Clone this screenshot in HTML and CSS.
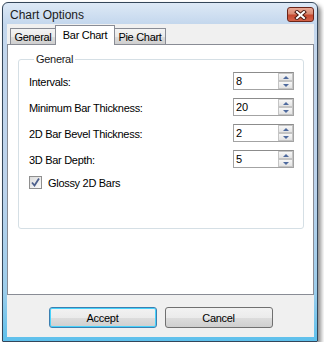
FILE: index.html
```html
<!DOCTYPE html>
<html>
<head>
  <meta charset="UTF-8">
  <title>Chart Options</title>
  <link rel="stylesheet" href="styles.css">
</head>
<body>
  <div class="window">
    <div class="titlebar">
      <span class="title">Chart Options</span>
      <span class="close-btn">
        <svg width="13" height="10" viewBox="0 0 13 10">
          <path d="M3 2 L10 8 M10 2 L3 8" stroke="#4a1a12" stroke-width="4" stroke-linecap="square"/>
          <path d="M3 2 L10 8 M10 2 L3 8" stroke="#ffffff" stroke-width="2" stroke-linecap="square"/>
        </svg>
      </span>
    </div>

    <div class="client">
      <div class="tab-strip">
        <span class="tab tab-general">General</span>
        <span class="tab tab-bar active">Bar Chart</span>
        <span class="tab tab-pie">Pie Chart</span>
      </div>

      <div class="tab-page">
        <fieldset class="group">
          <legend>General</legend>

          <div class="field-row">
            <span class="field-label">Intervals:</span>
            <div class="spin">
              <span class="spin-value">8</span>
              <div class="spin-buttons">
                <span class="spin-btn"><i class="arrow-up"></i></span>
                <span class="spin-btn"><i class="arrow-down"></i></span>
              </div>
            </div>
          </div>

          <div class="field-row">
            <span class="field-label">Minimum Bar Thickness:</span>
            <div class="spin">
              <span class="spin-value">20</span>
              <div class="spin-buttons">
                <span class="spin-btn"><i class="arrow-up"></i></span>
                <span class="spin-btn"><i class="arrow-down"></i></span>
              </div>
            </div>
          </div>

          <div class="field-row">
            <span class="field-label">2D Bar Bevel Thickness:</span>
            <div class="spin">
              <span class="spin-value">2</span>
              <div class="spin-buttons">
                <span class="spin-btn"><i class="arrow-up"></i></span>
                <span class="spin-btn"><i class="arrow-down"></i></span>
              </div>
            </div>
          </div>

          <div class="field-row">
            <span class="field-label">3D Bar Depth:</span>
            <div class="spin">
              <span class="spin-value">5</span>
              <div class="spin-buttons">
                <span class="spin-btn"><i class="arrow-up"></i></span>
                <span class="spin-btn"><i class="arrow-down"></i></span>
              </div>
            </div>
          </div>

          <div class="check-row">
            <span class="checkbox">
              <svg width="9" height="9" viewBox="0 0 9 9">
                <path d="M1 4.5 L3.5 7.5 L8 0.5" fill="none" stroke="#4c5f8c" stroke-width="1.8"/>
              </svg>
            </span>
            <span>Glossy 2D Bars</span>
          </div>
        </fieldset>
      </div>

      <div class="dialog-buttons">
        <span class="btn btn-default">Accept</span>
        <span class="btn">Cancel</span>
      </div>
    </div>
  </div>
</body>
</html>
```

FILE: styles.css
```css
body {
  margin: 0;
  background-color: #ffffff;
  font-family: "Liberation Sans", Arial, sans-serif;
  font-size: 11px;
  color: #000000;
  overflow: hidden;
}

/* Window frame */
.window {
  box-sizing: border-box;
  width: 316px;
  height: 340px;
  margin: 2px 0 0 2px;
  border: 1px solid #34465a;
  border-radius: 6px 6px 1px 1px;
  padding: 0 3px 4px 4px;
  background: linear-gradient(to bottom, #dde9f6 0, #c4d7ed 21px, #bcd3ec 55%, #9dcdeb 85%, #5dc0ec 100%);
  box-shadow: 3px 3px 4px rgba(0, 0, 0, 0.45);
  display: flex;
  flex-direction: column;
}

.titlebar {
  height: 21px;
  display: flex;
  justify-content: space-between;
  align-items: flex-start;
}

.title {
  font-size: 12px;
  color: #1b1b1b;
  margin: 5px 0 0 3px;
}

.close-btn {
  box-sizing: border-box;
  width: 27px;
  height: 15px;
  margin-top: 4px;
  border: 1px solid #6b2519;
  border-radius: 3px;
  background: linear-gradient(to bottom, #e9a996 0, #d98a72 45%, #c5482f 55%, #d4634a 100%);
  display: flex;
  align-items: center;
  justify-content: center;
}

.client {
  flex: 1;
  background-color: #f0f0f0;
  display: flex;
  flex-direction: column;
}

/* Tabs */
.tab-strip {
  height: 20px;
  display: flex;
  align-items: flex-end;
  padding-left: 3px;
}

.tab {
  box-sizing: border-box;
  height: 16px;
  border: 1px solid #898c95;
  border-bottom: none;
  background: linear-gradient(to bottom, #f3f3f3 0, #ebebeb 50%, #dddddd 51%, #cfcfcf 100%);
  display: flex;
  justify-content: center;
  padding-top: 2px;
  letter-spacing: -0.3px;
  position: relative;
}

.tab-general {
  width: 46px;
}

.tab-bar {
  width: 60px;
  margin-left: -1px;
}

.tab-pie {
  width: 52px;
  margin-left: -1px;
}

.tab.active {
  height: 20px;
  margin-bottom: -1px;
  background: #ffffff;
  padding-top: 3px;
  z-index: 1;
}

.tab-page {
  box-sizing: border-box;
  height: 251px;
  border: 1px solid #898c95;
  background-color: #ffffff;
}

/* Group box */
.group {
  box-sizing: border-box;
  height: 176px;
  margin: 8px 9px 0 10px;
  border: 1px solid #d5dfe5;
  border-radius: 3px;
  padding: 6px 9px 0 10px;
  letter-spacing: -0.3px;
}

.group legend {
  line-height: 13px;
  padding: 0 2px;
  margin-left: 5px;
  color: #1a1a1a;
}

.field-row {
  height: 18px;
  display: flex;
  justify-content: space-between;
  align-items: center;
  margin-bottom: 8px;
}

.field-label {
  padding-top: 1px;
}

.spin {
  box-sizing: border-box;
  width: 61px;
  height: 18px;
  border: 1px solid #a3a3a3;
  border-top-color: #8c8c8c;
  display: flex;
  justify-content: space-between;
}

.spin-value {
  padding: 2px 0 0 2px;
  letter-spacing: 0;
}

.spin-buttons {
  width: 15px;
  display: flex;
  flex-direction: column;
}

.spin-btn {
  box-sizing: border-box;
  flex: 1;
  border: 1px solid #c4c4c4;
  background: linear-gradient(to bottom, #f7f7f7, #e3e3e3);
  display: flex;
  align-items: center;
  justify-content: center;
}

.arrow-up {
  width: 0;
  height: 0;
  border-left: 3px solid transparent;
  border-right: 3px solid transparent;
  border-bottom: 3px solid #4e6a9e;
}

.arrow-down {
  width: 0;
  height: 0;
  border-left: 3px solid transparent;
  border-right: 3px solid transparent;
  border-top: 3px solid #4e6a9e;
}

.check-row {
  display: flex;
  align-items: center;
  gap: 6px;
  margin-top: 3px;
  height: 13px;
}

.checkbox {
  box-sizing: border-box;
  width: 13px;
  height: 13px;
  border: 1px solid #8f8f8f;
  background: linear-gradient(135deg, #dcdcdc, #fbfbfb);
  display: flex;
  align-items: center;
  justify-content: center;
}

/* Bottom buttons */
.dialog-buttons {
  display: flex;
  justify-content: center;
  gap: 8px;
  margin-top: 12px;
}

.btn {
  box-sizing: border-box;
  width: 108px;
  height: 21px;
  border: 1px solid #707070;
  border-radius: 3px;
  background: linear-gradient(to bottom, #f2f2f2 0, #ebebeb 50%, #dddddd 51%, #cfcfcf 100%);
  display: flex;
  align-items: center;
  justify-content: center;
  letter-spacing: -0.3px;
}

.btn-default {
  border-color: #3c7fb1;
  box-shadow: inset 0 0 0 1px #48d2fb;
}
```
